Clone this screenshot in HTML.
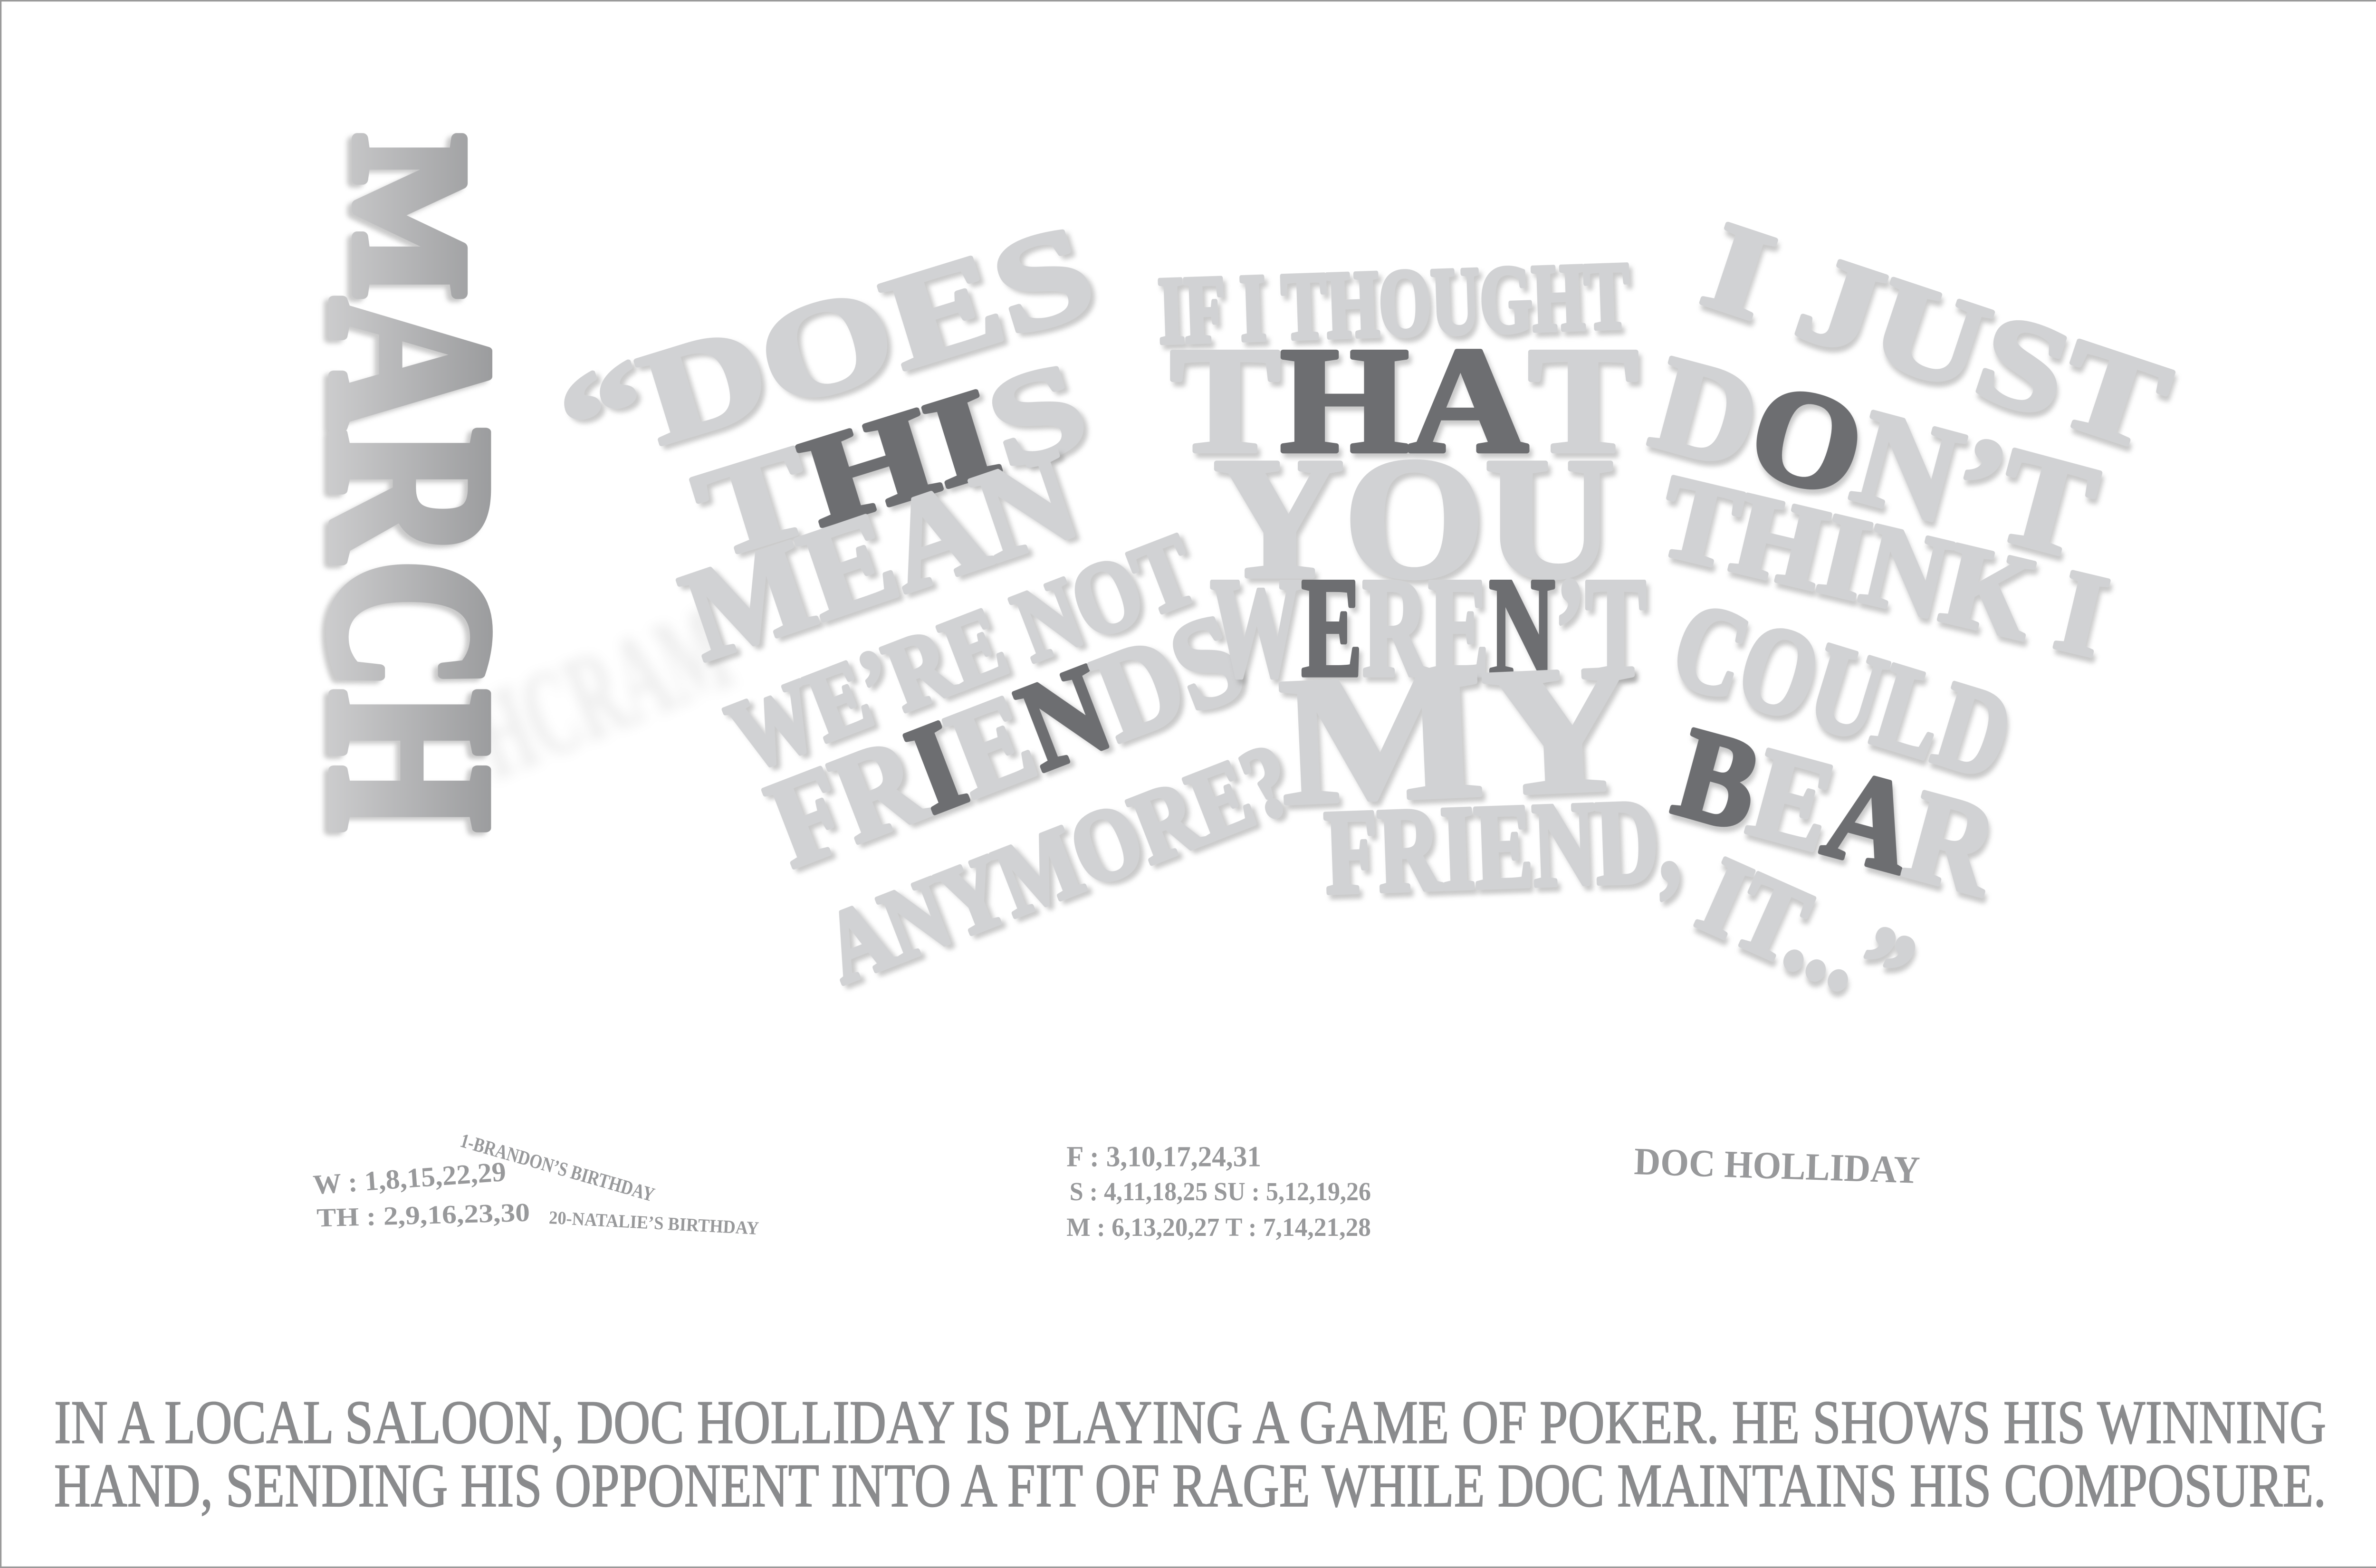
<!DOCTYPE html>
<html><head><meta charset="utf-8"><style>
html,body{margin:0;padding:0;background:#fff;}
body{width:5100px;height:3300px;overflow:hidden;}
svg{display:block;}
text{font-family:"Liberation Serif",serif;font-weight:bold;}
.l{fill:#d1d2d4;stroke:#d1d2d4;stroke-width:3;stroke-linejoin:round;filter:url(#sh);}
.d{fill:#6d6e71;stroke:#6d6e71;}
.s{fill:#98999b;}
.c{fill:#8a8b8d;font-weight:normal;stroke:#8a8b8d;stroke-width:.6;}
</style></head><body>
<svg width="5100" height="3300" viewBox="0 0 1568 1015" preserveAspectRatio="none">
<defs>
<filter id="sh" x="-10%" y="-20%" width="130%" height="160%"><feDropShadow dx="2" dy="3" stdDeviation="1.5" flood-color="#888" flood-opacity=".45"/></filter>
<filter id="bl"><feGaussianBlur stdDeviation="4"/></filter>
<linearGradient id="mg" x1="0" y1="1" x2="0" y2="0"><stop offset="0" stop-color="#d9d9da"/><stop offset="1" stop-color="#8d8e90"/></linearGradient>
</defs>
<rect x="0.5" y="0.5" width="1567" height="1014" fill="none" stroke="#9a9a9a" stroke-width="1"/>

<text transform="translate(320,505) rotate(-22)" font-size="80" textLength="170" lengthAdjust="spacingAndGlyphs" fill="#ececec" filter="url(#bl)">HCRAM</text>
<text transform="translate(216,88) rotate(90)" fill="url(#mg)" stroke="url(#mg)" stroke-width="7" stroke-linejoin="round" filter="url(#sh)"><tspan font-size="104" dy="-15" textLength="105" lengthAdjust="spacingAndGlyphs">M</tspan><tspan font-size="150" dy="15" textLength="345" lengthAdjust="spacingAndGlyphs">ARCH</tspan></text>

<text class="l" transform="translate(374,304) rotate(-17.1)" font-size="86" textLength="354" lengthAdjust="spacingAndGlyphs">“DOES</text>
<text class="l" transform="translate(462,362) rotate(-17.2)" font-size="82" textLength="257" lengthAdjust="spacingAndGlyphs">T<tspan class="d">HI</tspan>S</text>
<text class="l" transform="translate(455,428) rotate(-18.8)" font-size="84" textLength="261" lengthAdjust="spacingAndGlyphs">MEAN</text>
<text class="l" transform="translate(483,500) rotate(-21.1)" font-size="66" textLength="316" lengthAdjust="spacingAndGlyphs">WE’RE NOT</text>
<text class="l" transform="translate(512,562) rotate(-21.1)" font-size="82" textLength="319" lengthAdjust="spacingAndGlyphs">FR<tspan class="d">I</tspan>E<tspan class="d">N</tspan>DS</text>
<text class="l" transform="translate(545,637) rotate(-21.3)" font-size="66" textLength="317" lengthAdjust="spacingAndGlyphs">ANYMORE?</text>

<text class="l" transform="translate(750,222) rotate(-1.9)" font-size="62" textLength="305" lengthAdjust="spacingAndGlyphs">IF I THOUGHT</text>
<text class="l" transform="translate(757,292)" font-size="98" textLength="303" lengthAdjust="spacingAndGlyphs">T<tspan class="d">HA</tspan>T</text>
<text class="l" transform="translate(785,373)" font-size="112" textLength="260" lengthAdjust="spacingAndGlyphs">YOU</text>
<text class="l" transform="translate(783,437)" font-size="92" textLength="282" lengthAdjust="spacingAndGlyphs">W<tspan class="d">E</tspan>RE<tspan class="d">N</tspan>’T</text>
<text class="l" transform="translate(830,520) rotate(-2.5)" font-size="118" textLength="232" lengthAdjust="spacingAndGlyphs">MY</text>
<text class="l" transform="translate(858,578) rotate(-2)" font-size="78" textLength="230" lengthAdjust="spacingAndGlyphs">FRIEND,</text>
<text class="l" transform="translate(1095,598) rotate(24)" font-size="72" textLength="140" lengthAdjust="spacingAndGlyphs">IT...”</text>

<text class="l" transform="translate(1098,195) rotate(18.4)" font-size="82" textLength="308" lengthAdjust="spacingAndGlyphs">I JUST</text>
<text class="l" transform="translate(1065,287) rotate(15)" font-size="88" textLength="290" lengthAdjust="spacingAndGlyphs">D<tspan class="d">O</tspan>N’T</text>
<text class="l" transform="translate(1070,357) rotate(13.4)" font-size="76" textLength="293" lengthAdjust="spacingAndGlyphs">THINK I</text>
<text class="l" transform="translate(1078,440) rotate(17)" font-size="80" textLength="222" lengthAdjust="spacingAndGlyphs">COULD</text>
<text class="l" transform="translate(1080,525) rotate(15.2)" font-size="84" textLength="209" lengthAdjust="spacingAndGlyphs"><tspan class="d">B</tspan>E<tspan class="d">A</tspan>R</text>

<text class="s" transform="translate(297,742) rotate(16)" font-size="13" textLength="130" lengthAdjust="spacingAndGlyphs">1-BRANDON’S BIRTHDAY</text>
<text class="s" transform="translate(203,773) rotate(-4)" font-size="18" textLength="125" lengthAdjust="spacingAndGlyphs">W : 1,8,15,22,29</text>
<text class="s" transform="translate(205,794) rotate(-1.5)" font-size="17" textLength="138" lengthAdjust="spacingAndGlyphs">TH : 2,9,16,23,30</text>
<text class="s" transform="translate(355,792) rotate(3)" font-size="12" textLength="136" lengthAdjust="spacingAndGlyphs">20-NATALIE’S BIRTHDAY</text>
<text class="s" transform="translate(690,755)" font-size="19" textLength="126" lengthAdjust="spacingAndGlyphs">F : 3,10,17,24,31</text>
<text class="s" transform="translate(692,777)" font-size="17" textLength="195" lengthAdjust="spacingAndGlyphs">S : 4,11,18,25 SU : 5,12,19,26</text>
<text class="s" transform="translate(690,800)" font-size="17" textLength="197" lengthAdjust="spacingAndGlyphs">M : 6,13,20,27 T : 7,14,21,28</text>
<text class="s" transform="translate(1057,760) rotate(1.8)" font-size="25" textLength="185" lengthAdjust="spacingAndGlyphs">DOC HOLLIDAY</text>

<text class="c" x="35" y="934" font-size="40" textLength="1470" lengthAdjust="spacingAndGlyphs">IN A LOCAL SALOON, DOC HOLLIDAY IS PLAYING A GAME OF POKER. HE SHOWS HIS WINNING</text>
<text class="c" x="35" y="975" font-size="40" textLength="1470" lengthAdjust="spacingAndGlyphs">HAND, SENDING HIS OPPONENT INTO A FIT OF RAGE WHILE DOC MAINTAINS HIS COMPOSURE.</text>
</svg>
</body></html>
